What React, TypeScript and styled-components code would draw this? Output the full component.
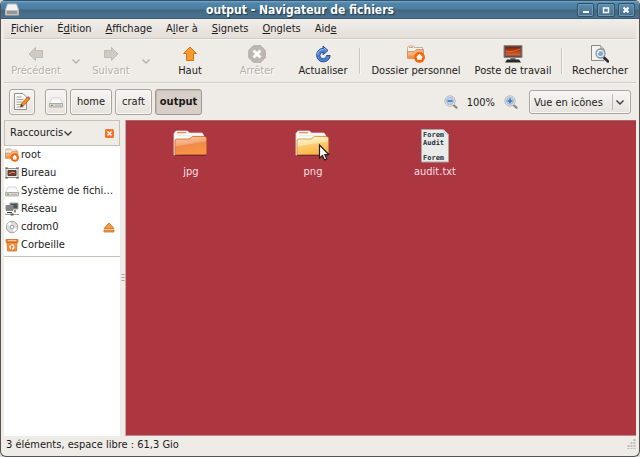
import React from "react";
import styled, { createGlobalStyle, css } from "styled-components";

const GlobalStyle = createGlobalStyle`
  * { box-sizing: border-box; }
  html, body { margin: 0; background: #dcdcdc; }
  body, button, select {
    font-family: "DejaVu Sans Condensed", "DejaVu Sans", sans-serif;
    font-size: 11px;
    color: #1c1b1a;
  }
  button { margin: 0; padding: 0; border: 0; background: none; }
  svg { display: block; flex: none; }
`;

const Window = styled.div`
  display: flex;
  flex-direction: column;
  min-height: 100vh;
  background: #efebe7;
  border: 1px solid #55524f;
  border-top: 0;
  border-radius: 5px 5px 6px 6px;
  overflow: hidden;
`;

const TitleBar = styled.header`
  display: grid;
  grid-template-columns: 18px 1fr 58px;
  align-items: center;
  height: 19px;
  flex: none;
  padding: 0 4px;
  border-top: 1px solid #34536a;
  border-bottom: 1px solid #3c5a70;
  background: linear-gradient(#7ba8c6 0, #5187ac 2px, #4a7c9f 8px, #426780 9px, #4b7391 17px);
`;

const Title = styled.h1`
  margin: 0;
  font-size: 12px;
  line-height: 16px;
  font-weight: bold;
  text-align: center;
  color: #fff;
  text-shadow: 1px 1px 1px #1f394c;
`;

const WindowButtons = styled.div`
  display: flex;
  justify-content: flex-end;
  gap: 3px;
`;

const WindowButton = styled.button`
  display: grid;
  place-items: center;
  width: 18px;
  height: 14px;
  border: 1px solid #2f4f67;
  border-radius: 2px;
  box-shadow: inset 0 0 0 1px #7099b5;
  background: linear-gradient(#5d8dae, #456e8b);
`;

const MenuBar = styled.nav`
  display: flex;
  align-items: center;
  gap: 14px;
  height: 20px;
  flex: none;
  margin: 0 3px;
  padding: 0 7px;
  background: linear-gradient(#f1ede9, #e4dfd9);
  border-bottom: 1px solid #d3cbc3;
`;

const MenuItem = styled.button`
  line-height: 16px;
  white-space: nowrap;
`;

const ToolBar = styled.div`
  display: flex;
  align-items: center;
  height: 44px;
  flex: none;
  margin: 0 3px;
  padding: 0 1px 0 2px;
  border-top: 1px solid #f8f6f3;
  border-bottom: 1px solid #d3cbc3;
`;

const ToolButton = styled.button<{ $width: number }>`
  display: flex;
  flex-direction: column;
  align-items: center;
  gap: 1px;
  padding-top: 1px;
  width: ${(p) => p.$width}px;
  line-height: 14px;
  white-space: nowrap;
  &:disabled { color: #b8afa7; text-shadow: 1px 1px 0 #fff; }
`;

const HistoryButton = styled.button`
  display: grid;
  place-items: center;
  width: 20px;
  height: 36px;
`;

const Separator = styled.span`
  width: 2px;
  height: 26px;
  margin: 0 3px;
  border-left: 1px solid #cfc7bf;
  border-right: 1px solid #f8f6f4;
`;

const Spacer = styled.span`flex: 1;`;

const LocationBar = styled.div`
  display: flex;
  align-items: center;
  height: 37px;
  flex: none;
  margin: 0 3px;
  padding: 0 5px;
  border-top: 1px solid #f8f6f3;
`;

const raised = css`
  border: 1px solid #aca49c;
  border-radius: 3px;
  box-shadow: inset 0 0 0 1px #faf8f6;
  background: linear-gradient(#f7f5f3, #e7e2dd);
`;

const LocationButton = styled.button<{ $active?: boolean; $icon?: boolean }>`
  display: flex;
  align-items: center;
  justify-content: center;
  height: 26px;
  padding: 0 ${(p) => (p.$icon ? 3 : 6)}px;
  line-height: 14px;
  ${raised}
  ${(p) =>
    p.$active &&
    css`
      padding: 0 4px;
      font-weight: bold;
      background: #d8cfc8;
      border-color: #a0978f;
      box-shadow: inset 1px 1px 1px #c3b9b0;
    `}
`;

const Path = styled.nav`
  display: flex;
  gap: 3px;
  margin-left: 10px;
`;

const ZoomControls = styled.div`
  display: flex;
  align-items: center;
  gap: 9px;
  margin-right: 11px;
`;

const SelectBox = styled.label`
  position: relative;
  display: block;
  width: 102px;
  height: 24px;
  svg {
    position: absolute;
    right: 3px;
    top: 4px;
    pointer-events: none;
  }
`;

const Select = styled.select`
  ${raised}
  appearance: none;
  width: 100%;
  height: 100%;
  padding: 0 20px 0 4px;
`;

const Body = styled.main`
  display: flex;
  flex: 1;
  margin: 0 3px;
`;

const Sidebar = styled.aside`
  display: flex;
  flex-direction: column;
  width: 116px;
  flex: none;
  background: #fff;
`;

const SidebarHeader = styled.div`
  display: flex;
  align-items: center;
  justify-content: space-between;
  height: 26px;
  padding: 0 5px;
  border: 1px solid #c9bfb7;
  background: #efebe7;
`;

const SidebarTitle = styled.button`
  display: flex;
  align-items: center;
  line-height: 14px;
`;

const Places = styled.ul`
  margin: 0;
  padding: 0 0 2px;
  list-style: none;
  border-bottom: 1px solid #c9c2ba;
`;

const Place = styled.li`
  display: flex;
  align-items: center;
  gap: 2px;
  height: 18px;
  padding: 0 5px 0 1px;
`;

const PlaceName = styled.span`
  flex: 1;
  min-width: 0;
  line-height: 16px;
  white-space: nowrap;
`;

const Splitter = styled.div`
  display: grid;
  place-items: center;
  width: 6px;
  flex: none;
  border-right: 1px solid #c9a9a8;
  background: #efebe7;
`;

const IconView = styled.section`
  display: flex;
  flex: 1;
  flex-wrap: wrap;
  align-content: flex-start;
  padding: 6px 0 0 4px;
  border-top: 1px solid #a36a6c;
  border-bottom: 1px solid #c08788;
  background: #ad3741;
`;

const FileItem = styled.figure`
  display: flex;
  flex-direction: column;
  align-items: center;
  gap: 2px;
  width: 122px;
  margin: 0;
`;

const FileName = styled.figcaption`
  line-height: 14px;
  color: #f4dfe0;
`;

const StatusBar = styled.footer`
  display: flex;
  align-items: center;
  justify-content: space-between;
  height: 20px;
  flex: none;
  padding: 0 3px 4px 5px;
`;

const Chevron = ({ color = "#3d3935" }: { color?: string }) => (
  <svg width="10" height="14" viewBox="0 0 10 14">
    <path d="M1.500 5.500 5 9l3.500-3.500" fill="none" stroke={color} strokeWidth="1.400" />
  </svg>
);

const Arrow = ({ turn, fill, edge }: { turn: number; fill: string; edge: string }) => (
  <svg width="18" height="18" viewBox="0 0 18 18">
    <path
      transform={`rotate(${turn} 9 9)`}
      d="M9 2 15.500 8.500h-3v7h-7v-7h-3Z"
      fill={fill}
      stroke={edge}
      strokeLinejoin="round"
    />
  </svg>
);

const StopIcon = () => (
  <svg width="18" height="18" viewBox="0 0 18 18">
    <path d="M5.500 0h7L18 5.500v7L12.500 18h-7L0 12.500v-7Z" fill="#bdb5b0" />
    <path d="m5.500 5.500 7 7m0-7-7 7" stroke="#fff" strokeWidth="3" />
  </svg>
);

const ReloadIcon = () => (
  <svg width="18" height="18" viewBox="0 0 18 18">
    <path
      d="M9 1v2.300A6.800 6.800 0 1 0 16.200 10.500h-3.700A3.300 3.300 0 1 1 9 7.200v2.600l5-4.300Z"
      fill="#4b83d2"
      stroke="#1f468f"
      strokeWidth=".9"
      strokeLinejoin="round"
    />
    <path d="M10 3 12.500 5.500M3.600 9.500A5.500 5.500 0 0 1 9.500 4.500" fill="none" stroke="#a5c5ef" strokeWidth=".9" />
  </svg>
);

const HomeFolderIcon = ({ size = 18 }: { size?: number }) => (
  <svg width={size} height={size} viewBox="0 0 18 18">
    <path d="M.500 12V2.500L1.500 1h5l1 1.500h8V12Z" fill="#f3f1ee" stroke="#a7a29c" strokeWidth=".8" />
    <path d="M2 2.500h4" stroke="#f49a4a" />
    <path d="M.500 13.500V6.500h7l1.500-2h7.500v9Z" fill="#f6b27c" stroke="#cf8a58" strokeWidth=".8" />
    <path d="M1 10.500h14v2.500H1Z" fill="#f2914a" />
    <circle cx="12.500" cy="12.300" r="5.500" fill="#f9660a" />
    <path d="m12.500 8.700 3.500 3.500h-1.200v2.500h-4.600v-2.500H9Z" fill="#fff" />
  </svg>
);

const ScreenIcon = () => (
  <svg width="20" height="18" viewBox="0 0 20 18">
    <defs>
      <linearGradient id="screen" x2="0" y2="1">
        <stop stopColor="#7a2410" />
        <stop offset=".5" stopColor="#b8401a" />
        <stop offset="1" stopColor="#e0662a" />
      </linearGradient>
    </defs>
    <path d="M1 .500h18v12H1Z" fill="#57514d" stroke="#8d8883" />
    <path d="M2.500 2h15v8.500h-15Z" fill="url(#screen)" />
    <path d="M2.500 6c6 2 10-1 15-2" stroke="#e88349" fill="none" strokeWidth=".7" />
    <path d="M7.500 13h5v2h-5Z" fill="#77736f" />
    <path d="M4 14.500h12l2 3H2Z" fill="#2b2927" />
  </svg>
);

const SearchIcon = () => (
  <svg width="18" height="18" viewBox="0 0 18 18">
    <path d="M.500.500h9L13 4v11.500H.500Z" fill="#f3f3f2" stroke="#8b8986" />
    <path d="M9.500.500V4H13" fill="#d3d3d0" stroke="#8b8986" strokeWidth=".6" />
    <path d="m13 12.500 4 4" stroke="#292b2e" strokeWidth="2.500" strokeLinecap="round" />
    <circle cx="9.500" cy="8.500" r="4.500" fill="#d8e7f3" stroke="#8d9397" strokeWidth="1.300" />
    <circle cx="9.500" cy="8.500" r="2.500" fill="#81a9cd" />
    <path d="M7 8a3 3 0 0 1 4-2" fill="none" stroke="#fff" />
  </svg>
);

const MagnifierIcon = ({ plus }: { plus?: boolean }) => (
  <svg width="14" height="14" viewBox="0 0 14 14">
    <path d="m10 10.500 2.500 2.200" stroke="#8a8782" strokeWidth="2.200" strokeLinecap="round" />
    <circle cx="6" cy="6" r="5.200" fill="#e6ecf2" stroke="#b4b6b7" />
    <circle cx="6" cy="6" r="3.600" fill="#bcd1e8" stroke="#8eaed2" strokeWidth=".7" />
    <path d={plus ? "M3.500 6h5M6 3.500v5" : "M3.500 6h5"} stroke="#3f74b4" strokeWidth="1.600" />
  </svg>
);

const EditIcon = () => (
  <svg width="18" height="18" viewBox="0 0 18 18">
    <path d="M1.500.500h8.500l3.500 3.500v12.500h-12Z" fill="#f8f8f7" stroke="#92908c" />
    <path d="M3.500 4h5m-5 2.500h7m-7 2.500h6m-6 2.500h5m-5 2.500h7" stroke="#a6a39f" />
    <path d="m7.500 14 .800-3.300 6-6.500 2.300 2-6 6.500Z" fill="#f28b20" stroke="#a65b15" strokeWidth=".7" />
    <path d="m7.500 14 .700-2.900 2.100 1.800Z" fill="#453c34" />
    <path d="m14.300 4.200 1-1 2.200 2-1 1.100Z" fill="#d95050" />
  </svg>
);

const DriveIcon = () => (
  <svg width="14" height="14" viewBox="0 0 14 14">
    <path d="M3 3h8l2.500 5.500H.500Z" fill="#fafafa" stroke="#c6c4c1" strokeWidth=".7" />
    <path d="M.500 8.500h13v3.500H.500Z" fill="#d8d6d3" stroke="#a19f9c" strokeWidth=".8" />
    <path d="M2 10.300h2" stroke="#58c21e" strokeWidth="1.300" />
    <path d="M6 10.300h6" stroke="#b3b0ad" strokeWidth=".8" />
  </svg>
);

const CabinetIcon = () => (
  <svg width="14" height="13" viewBox="0 0 14 13">
    <path d="M2.500 1h9L13.500 7v5H.500V7Z" fill="#f3f3f2" stroke="#bcbab7" />
    <path d="M1 7h12v5H1Z" fill="#c2c0bd" />
    <path d="M3 8v3m2-3v3m2-3v3m2-3v3m2-3v3" stroke="#6e6c6a" />
  </svg>
);

const DesktopIcon = () => (
  <svg width="14" height="14" viewBox="0 0 14 14">
    <path d="M1 2.500h12v9H1Z" fill="#eeece9" stroke="#8f8a85" />
    <path d="M3 4.500h8v5H3Z" fill="#7d3a26" stroke="#4c3d37" />
    <path d="M4 8 7 6l3 1" fill="none" stroke="#e0926b" />
    <path d="M0 2h3M0 12h3M11 2h3M11 12h3" stroke="#5c5855" />
  </svg>
);

const NetworkIcon = () => (
  <svg width="14" height="14" viewBox="0 0 14 14">
    <path d="M5 1h8v6H5Z" fill="#4b5359" stroke="#a9a6a2" />
    <path d="M1 3.500h7v5H1Z" fill="#7e868b" stroke="#8f8b87" />
    <path d="M2 10.500h5M10 8v2.500" stroke="#3d3a37" strokeWidth="1.200" />
    <path d="M0 12.500h14" stroke="#a39f9b" />
    <path d="M5.500 11.500h3v2h-3Z" fill="#5e5a56" />
  </svg>
);

const DiscIcon = () => (
  <svg width="14" height="14" viewBox="0 0 14 14">
    <circle cx="7" cy="7" r="5.700" fill="#dddcde" stroke="#a5a3a5" />
    <path d="m7 7-5-2a5.500 5.500 0 0 1 3-3ZM7 7l5 2a5.500 5.500 0 0 1-3 3Z" fill="#fff" />
    <circle cx="7" cy="7" r="1.800" fill="#fff" stroke="#9c9a9d" />
  </svg>
);

const TrashIcon = () => (
  <svg width="14" height="14" viewBox="0 0 14 14">
    <path d="M2 4h10l-.500 9h-9Z" fill="#f08f42" stroke="#d07029" strokeWidth=".8" />
    <path d="M1 1.500h12v3H1Z" fill="#ef8a3b" stroke="#c96a24" strokeWidth=".8" />
    <path d="M3 2.500h8" stroke="#ffc693" />
    <circle cx="7" cy="8.800" r="2" fill="none" stroke="#fff" strokeWidth="1.200" strokeDasharray="3 1" />
  </svg>
);

const EjectIcon = () => (
  <svg width="12" height="11" viewBox="0 0 12 11">
    <path d="m6 .800 5 5.700H1Z" fill="#f79a45" stroke="#cb7021" strokeWidth=".8" />
    <path d="M1 8h10v2H1Z" fill="#f79a45" stroke="#cb7021" strokeWidth=".8" />
  </svg>
);

const CloseIcon = () => (
  <svg width="9" height="9" viewBox="0 0 9 9">
    <rect width="9" height="9" rx="1.500" fill="#f0742e" />
    <path d="m2.500 2.500 4 4m0-4-4 4" stroke="#fff" strokeWidth="1.400" />
  </svg>
);

const FolderIcon = ({ id, light }: { id: string; light?: boolean }) => (
  <svg width="36" height="36" viewBox="0 0 36 36" overflow="visible">
    <defs>
      <linearGradient id={id} x2=".3" y2="1">
        <stop stopColor={light ? "#fff6d8" : "#f9c7a4"} />
        <stop offset=".48" stopColor={light ? "#fbe3a0" : "#f3a878"} />
        <stop offset=".54" stopColor={light ? "#f7cd72" : "#ef8a4a"} />
        <stop offset="1" stopColor={light ? "#ffb648" : "#fb9442"} />
      </linearGradient>
    </defs>
    <path d="M1 28V6.500L3 4h11.500l2 2H29l1.500 2v16Z" fill="#fbfaf8" stroke="#dedad5" strokeWidth=".8" />
    <path d="M4 5.700h9" stroke="#f78a3c" strokeWidth="1.200" />
    <path d="M4 8.700h25" stroke="#e4e1dc" strokeWidth=".7" />
    <path d="M2 27.500V13l1-1h13l3.500-2.500H32l1.500 1.500v15.500l-1 1Z" fill={`url(#${id})`} stroke={light ? "#c98c35" : "#c9682b"} strokeWidth=".8" />
    <path d="M2 28.500h31" stroke="#69232a" strokeWidth=".8" />
    {light && (
      <path d="M24.500 18v13l3-2.500 2 4.500 2.300-1-2-4.500h4Z" fill="#fff" stroke="#242321" strokeWidth="1.200" />
    )}
  </svg>
);

const TextFileIcon = () => (
  <svg width="36" height="36" viewBox="0 0 36 36">
    <path d="M4.500 2.500h22l5 5v27.500h-27Z" fill="#e9ebe9" stroke="#a9a6a3" />
    <path d="M26.500 2.500q1 5 5 5Z" fill="#fff" stroke="#b5b2ae" strokeWidth=".7" />
    <g fill="#29313a" fontFamily="DejaVu Sans Mono, monospace" fontSize="7" fontWeight="bold">
      <text x="6" y="10">Forem</text>
      <text x="6" y="18">Audit</text>
      <text x="6" y="33">Forem</text>
    </g>
  </svg>
);

const GripIcon = () => (
  <svg width="10" height="10" viewBox="0 0 10 10">
    <path d="M8.500 0v10M5.500 3v7M2.500 6v4" stroke="#c4bdb6" strokeWidth="2" strokeDasharray="2 1" />
  </svg>
);

const SplitHandle = () => (
  <svg width="4" height="8" viewBox="0 0 4 8">
    <path d="M2 0v8" stroke="#aaa29b" strokeWidth="3" strokeDasharray="1 2" />
  </svg>
);

const Accel = ({ text, at }: { text: string; at: number }) => (
  <>{text.slice(0, at)}<u>{text[at]}</u>{text.slice(at + 1)}</>
);

const menus: [string, number][] = [
  ["Fichier", 0], ["Édition", 1], ["Affichage", 0], ["Aller à", 1],
  ["Signets", 0], ["Onglets", 0], ["Aide", 3],
];

const places: [string, React.ReactNode][] = [
  ["root", <HomeFolderIcon size={14} />],
  ["Bureau", <DesktopIcon />],
  ["Système de fichi…", <DriveIcon />],
  ["Réseau", <NetworkIcon />],
  ["cdrom0", <DiscIcon />],
  ["Corbeille", <TrashIcon />],
];

export default function App() {
  return (
    <>
      <GlobalStyle />
      <Window>
        <TitleBar>
          <CabinetIcon />
          <Title>output - Navigateur de fichiers</Title>
          <WindowButtons>
            <WindowButton aria-label="Réduire">
              <svg width="8" height="8"><path d="M1 6h6" stroke="#fff" strokeWidth="2" /></svg>
            </WindowButton>
            <WindowButton aria-label="Agrandir">
              <svg width="8" height="8"><path d="M1.500 2h5v4.500h-5Z" fill="none" stroke="#fff" strokeWidth="1.500" /></svg>
            </WindowButton>
            <WindowButton aria-label="Fermer">
              <svg width="8" height="8"><path d="m1.500 1.500 5 5m0-5-5 5" stroke="#fff" strokeWidth="2" /></svg>
            </WindowButton>
          </WindowButtons>
        </TitleBar>
        <MenuBar>
          {menus.map(([text, at]) => (
            <MenuItem key={text}><Accel text={text} at={at} /></MenuItem>
          ))}
        </MenuBar>
        <ToolBar>
          <ToolButton $width={60} disabled><Arrow turn={-90} fill="#d0cac5" edge="#c2bbb5" />Précédent</ToolButton>
          <HistoryButton disabled aria-label="Historique précédent"><Chevron color="#b8afa7" /></HistoryButton>
          <ToolButton $width={50} disabled><Arrow turn={90} fill="#d0cac5" edge="#c2bbb5" />Suivant</ToolButton>
          <HistoryButton disabled aria-label="Historique suivant"><Chevron color="#b8afa7" /></HistoryButton>
          <ToolButton $width={68}><Arrow turn={0} fill="#fb9a33" edge="#d47216" />Haut</ToolButton>
          <ToolButton $width={66} disabled><StopIcon />Arrêter</ToolButton>
          <ToolButton $width={66}><ReloadIcon />Actualiser</ToolButton>
          <Separator />
          <ToolButton $width={104}><HomeFolderIcon />Dossier personnel</ToolButton>
          <ToolButton $width={90}><ScreenIcon />Poste de travail</ToolButton>
          <Separator />
          <ToolButton $width={68}><SearchIcon />Rechercher</ToolButton>
        </ToolBar>
        <LocationBar>
          <LocationButton $icon aria-label="Modifier l'emplacement"><EditIcon /></LocationButton>
          <Path>
            <LocationButton $icon aria-label="Système de fichiers"><DriveIcon /></LocationButton>
            <LocationButton>home</LocationButton>
            <LocationButton>craft</LocationButton>
            <LocationButton $active>output</LocationButton>
          </Path>
          <Spacer />
          <ZoomControls>
            <button aria-label="Zoom arrière"><MagnifierIcon /></button>
            <span>100%</span>
            <button aria-label="Zoom avant"><MagnifierIcon plus /></button>
          </ZoomControls>
          <SelectBox>
            <Select aria-label="Mode d'affichage"><option>Vue en icônes</option></Select>
            <svg width="16" height="16" viewBox="0 0 16 16">
              <path d="M.500 0v16" stroke="#c3bbb3" />
              <path d="m4.500 6.500 3.500 3.500 3.500-3.500" fill="none" stroke="#3d3935" strokeWidth="1.400" />
            </svg>
          </SelectBox>
        </LocationBar>
        <Body>
          <Sidebar>
            <SidebarHeader>
              <SidebarTitle>Raccourcis<Chevron /></SidebarTitle>
              <button aria-label="Fermer le panneau"><CloseIcon /></button>
            </SidebarHeader>
            <Places>
              {places.map(([name, icon]) => (
                <Place key={name}>
                  {icon}
                  <PlaceName>{name}</PlaceName>
                  {name === "cdrom0" && <button aria-label="Éjecter"><EjectIcon /></button>}
                </Place>
              ))}
            </Places>
          </Sidebar>
          <Splitter><SplitHandle /></Splitter>
          <IconView>
            <FileItem><FolderIcon id="folder-jpg" /><FileName>jpg</FileName></FileItem>
            <FileItem><FolderIcon id="folder-png" light /><FileName>png</FileName></FileItem>
            <FileItem><TextFileIcon /><FileName>audit.txt</FileName></FileItem>
          </IconView>
        </Body>
        <StatusBar>
          <span>3 éléments, espace libre : 61,3 Gio</span>
          <GripIcon />
        </StatusBar>
      </Window>
    </>
  );
}
